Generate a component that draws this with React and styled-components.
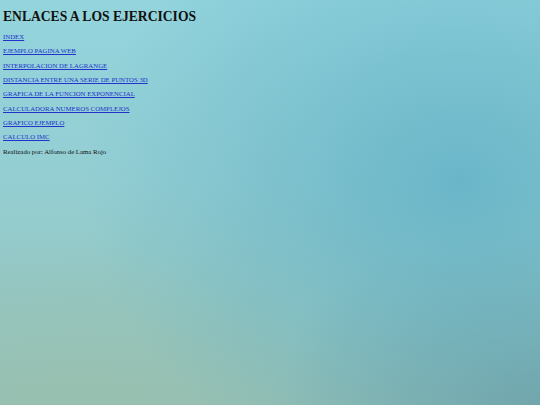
import React from 'react'
import styled, { createGlobalStyle } from 'styled-components'

const GlobalStyle = createGlobalStyle`
  html, body {
    margin: 0;
    height: 100%;
  }

  body {
    font-family: 'Liberation Serif', 'Times New Roman', serif;
    background:
      radial-gradient(ellipse 70% 75% at 85% 45%, rgba(92, 174, 198, 0.75), rgba(92, 174, 198, 0) 100%),
      radial-gradient(ellipse 50% 45% at 100% 100%, rgba(105, 152, 160, 0.7), rgba(105, 152, 160, 0) 100%),
      radial-gradient(ellipse 50% 40% at 15% 100%, rgba(155, 192, 172, 0.6), rgba(155, 192, 172, 0) 100%),
      linear-gradient(to bottom, #93d4dd 0%, #94ced2 45%, #94bfb4 100%);
  }

  #root {
    min-height: 100%;
  }
`

const Page = styled.div`
  padding: 3px 3px;
  color: #111;
`

const Title = styled.h1`
  margin: 5px 0 5px;
  font-size: 13.6px;
  font-weight: bold;
  line-height: 17px;
`

const Paragraph = styled.p`
  margin: 0;
  font-size: 6.8px;
  line-height: 14.35px;
`

const Link = styled.a`
  color: #2232cc;
  text-decoration: underline;
`

const links = [
  'INDEX',
  'EJEMPLO PAGINA WEB',
  'INTERPOLACION DE LAGRANGE',
  'DISTANCIA ENTRE UNA SERIE DE PUNTOS 3D',
  'GRAFICA DE LA FUNCION EXPONENCIAL',
  'CALCULADORA NUMEROS COMPLEJOS',
  'GRAFICO EJEMPLO',
  'CALCULO IMC'
]

export default function App () {
  return (
    <>
      <GlobalStyle />
      <Page>
        <Title>ENLACES A LOS EJERCICIOS</Title>
        {links.map(label => (
          <Paragraph key={label}>
            <Link href='#'>{label}</Link>
          </Paragraph>
        ))}
        <Paragraph>Realizado por: Alfonso de Lama Rojo</Paragraph>
      </Page>
    </>
  )
}
